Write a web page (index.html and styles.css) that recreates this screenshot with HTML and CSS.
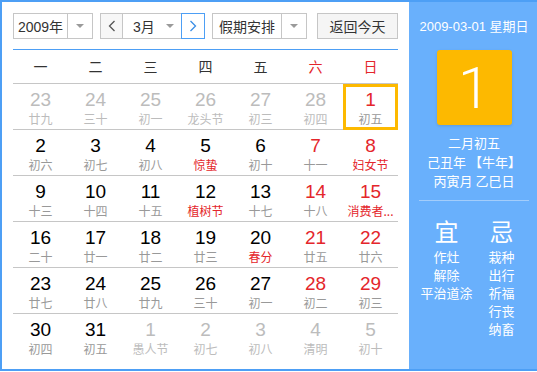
FILE: index.html
```html
<!DOCTYPE html>
<html lang="zh-CN">
<head>
    <meta charset="UTF-8">
    <title>万年历</title>
    <link rel="stylesheet" href="styles.css">
</head>
<body>
    <div class="calendar">
        <div class="main">
            <div class="toolbar">
                <div class="select year-select">
                    <span class="select-text">2009年</span>
                    <span class="select-arrow"><i class="tri"></i></span>
                </div>
                <div class="month-group">
                    <button class="nav-btn prev">
                        <svg width="8" height="12" viewBox="0 0 8 12"><polyline points="6.5,1 1.5,6 6.5,11" fill="none" stroke="#555" stroke-width="1.3"/></svg>
                    </button>
                    <div class="month-select">
                        <span>3月</span>
                        <i class="tri"></i>
                    </div>
                    <button class="nav-btn next">
                        <svg width="8" height="12" viewBox="0 0 8 12"><polyline points="1.5,1 6.5,6 1.5,11" fill="none" stroke="#3a8ee6" stroke-width="1.3"/></svg>
                    </button>
                </div>
                <div class="select holiday-select">
                    <span class="select-text">假期安排</span>
                    <span class="select-arrow"><i class="tri"></i></span>
                </div>
                <button class="today-btn">返回今天</button>
            </div>

            <div class="week-head">
                <span>一</span><span>二</span><span>三</span><span>四</span><span>五</span><span class="weekend">六</span><span class="weekend">日</span>
            </div>

            <div class="days">
                <div class="day other"><b>23</b><em>廿九</em></div>
                <div class="day other"><b>24</b><em>三十</em></div>
                <div class="day other"><b>25</b><em>初一</em></div>
                <div class="day other"><b>26</b><em>龙头节</em></div>
                <div class="day other"><b>27</b><em>初三</em></div>
                <div class="day other"><b>28</b><em>初四</em></div>
                <div class="day weekend selected"><b>1</b><em>初五</em></div>

                <div class="day"><b>2</b><em>初六</em></div>
                <div class="day"><b>3</b><em>初七</em></div>
                <div class="day"><b>4</b><em>初八</em></div>
                <div class="day"><b>5</b><em class="fest">惊蛰</em></div>
                <div class="day"><b>6</b><em>初十</em></div>
                <div class="day weekend"><b>7</b><em>十一</em></div>
                <div class="day weekend"><b>8</b><em class="fest">妇女节</em></div>

                <div class="day"><b>9</b><em>十三</em></div>
                <div class="day"><b>10</b><em>十四</em></div>
                <div class="day"><b>11</b><em>十五</em></div>
                <div class="day"><b>12</b><em class="fest">植树节</em></div>
                <div class="day"><b>13</b><em>十七</em></div>
                <div class="day weekend"><b>14</b><em>十八</em></div>
                <div class="day weekend"><b>15</b><em class="fest">消费者...</em></div>

                <div class="day"><b>16</b><em>二十</em></div>
                <div class="day"><b>17</b><em>廿一</em></div>
                <div class="day"><b>18</b><em>廿二</em></div>
                <div class="day"><b>19</b><em>廿三</em></div>
                <div class="day"><b>20</b><em class="fest">春分</em></div>
                <div class="day weekend"><b>21</b><em>廿五</em></div>
                <div class="day weekend"><b>22</b><em>廿六</em></div>

                <div class="day"><b>23</b><em>廿七</em></div>
                <div class="day"><b>24</b><em>廿八</em></div>
                <div class="day"><b>25</b><em>廿九</em></div>
                <div class="day"><b>26</b><em>三十</em></div>
                <div class="day"><b>27</b><em>初一</em></div>
                <div class="day weekend"><b>28</b><em>初二</em></div>
                <div class="day weekend"><b>29</b><em>初三</em></div>

                <div class="day"><b>30</b><em>初四</em></div>
                <div class="day"><b>31</b><em>初五</em></div>
                <div class="day other"><b>1</b><em>愚人节</em></div>
                <div class="day other"><b>2</b><em>初七</em></div>
                <div class="day other"><b>3</b><em>初八</em></div>
                <div class="day other"><b>4</b><em>清明</em></div>
                <div class="day other"><b>5</b><em>初十</em></div>
            </div>
        </div>

        <div class="side">
            <div class="side-date">2009-03-01 星期日</div>
            <div class="big-day">1</div>
            <div class="lunar">
                <p>二月初五</p>
                <p>己丑年 【牛年】</p>
                <p>丙寅月 乙巳日</p>
            </div>
            <div class="almanac">
                <div class="almanac-col">
                    <h3>宜</h3>
                    <p>作灶</p>
                    <p>解除</p>
                    <p>平治道涂</p>
                </div>
                <div class="almanac-col">
                    <h3>忌</h3>
                    <p>栽种</p>
                    <p>出行</p>
                    <p>祈福</p>
                    <p>行丧</p>
                    <p>纳畜</p>
                </div>
            </div>
        </div>
    </div>
</body>
</html>
```

FILE: styles.css
```css
/* styles.css */
body {
    margin: 0;
    font-family: "Liberation Sans", "Noto Sans CJK SC", sans-serif;
    background-color: #fff;
    color: #333;
}

.calendar {
    display: flex;
    width: 537px;
    height: 371px;
    box-sizing: border-box;
    border: 2px solid #4d9ff5;
    border-right: none;
}

.main {
    width: 407px;
    padding: 11px 11px 0 11px;
    box-sizing: border-box;
    background-color: #fff;
}

/* toolbar */
.toolbar {
    display: flex;
    height: 26px;
    padding-bottom: 10px;
    border-bottom: 1px solid #4d9ff5;
}

.select {
    display: flex;
    height: 26px;
    box-sizing: border-box;
    border: 1px solid #c6c6c6;
    font-size: 14px;
    color: #333;
}

.select-text {
    display: flex;
    align-items: center;
    justify-content: center;
    flex: 1;
}

.select-arrow {
    display: flex;
    align-items: center;
    justify-content: center;
    width: 24px;
    border-left: 1px solid #c6c6c6;
}

.tri {
    width: 0;
    height: 0;
    border-left: 4px solid transparent;
    border-right: 4px solid transparent;
    border-top: 4px solid #9a9a9a;
}

.year-select {
    width: 80px;
}

.month-group {
    display: flex;
    margin-left: 7px;
    height: 26px;
}

.nav-btn {
    display: flex;
    align-items: center;
    justify-content: center;
    width: 23px;
    height: 26px;
    padding: 0;
    box-sizing: border-box;
    border: 1px solid #c6c6c6;
    background-color: #f7f7f7;
}

.nav-btn.next {
    width: 24px;
    border-color: #4d9ff5;
    background-color: #fff;
}

.month-select {
    display: flex;
    align-items: center;
    justify-content: space-between;
    width: 58px;
    height: 26px;
    box-sizing: border-box;
    padding: 0 7px 0 10px;
    border-top: 1px solid #c6c6c6;
    border-bottom: 1px solid #c6c6c6;
    font-size: 14px;
}

.holiday-select {
    width: 95px;
    margin-left: 7px;
}

.today-btn {
    width: 81px;
    height: 26px;
    margin-left: 10px;
    padding: 0;
    border: 1px solid #c6c6c6;
    background-color: #f5f5f5;
    font-family: "Liberation Sans", "Noto Sans CJK SC", sans-serif;
    font-size: 14px;
    color: #333;
}

/* week header */
.week-head {
    display: grid;
    grid-template-columns: repeat(7, 55px);
    height: 33px;
    border-bottom: 1px solid #c6c6c6;
    font-family: "Noto Sans CJK SC", sans-serif;
    font-size: 14px;
    line-height: 33px;
    text-align: center;
    color: #333;
}

.week-head .weekend {
    color: #e4262b;
}

/* days grid */
.days {
    display: grid;
    grid-template-columns: repeat(7, 55px);
}

.day {
    height: 46px;
    box-sizing: border-box;
    padding-top: 5px;
    border-bottom: 1px solid #c6c6c6;
    text-align: center;
}

.day:nth-last-child(-n+7) {
    border-bottom: none;
}

.day b {
    display: block;
    font-weight: normal;
    font-size: 19px;
    line-height: 21px;
    color: #000;
}

.day em {
    display: block;
    font-style: normal;
    font-family: "Noto Sans CJK SC", sans-serif;
    font-size: 12px;
    line-height: 18px;
    color: #999;
}

.day.weekend b {
    color: #e4262b;
}

.day em.fest {
    color: #e4262b;
}

.day.other b,
.day.other em {
    color: #bcbcbc;
}

.day.selected {
    border: 3px solid #fdb900;
    padding-top: 2px;
}

/* side panel */
.side {
    flex: 1;
    background-color: #69b0fc;
    color: #fff;
    text-align: center;
    font-family: "Liberation Sans", "Noto Sans CJK SC", sans-serif;
}

.side-date {
    margin-top: 16px;
    font-size: 13px;
    line-height: 18px;
}

.big-day {
    width: 75px;
    height: 75px;
    margin: 14px auto 0;
    border-radius: 3px;
    background-color: #fdb900;
    font-family: Roboto, "Liberation Sans", sans-serif;
    font-size: 58px;
    font-weight: 300;
    line-height: 76px;
    box-shadow: 0 1px 3px rgba(0, 0, 0, 0.12);
}

.lunar {
    margin: 8px 10px 0;
    padding-bottom: 10px;
    border-bottom: 1px solid #a3cdfb;
    font-family: "Noto Sans CJK SC", sans-serif;
    font-size: 13px;
    line-height: 19px;
}

.lunar p {
    margin: 0;
}

.almanac {
    display: grid;
    grid-template-columns: 55px 55px;
    margin: 0 10px;
    padding-top: 16px;
    font-family: "Noto Sans CJK SC", sans-serif;
}

.almanac h3 {
    margin: 0 0 3px;
    font-size: 24px;
    font-weight: normal;
    line-height: 28px;
}

.almanac p {
    margin: 0;
    font-size: 13px;
    line-height: 18px;
}
```
